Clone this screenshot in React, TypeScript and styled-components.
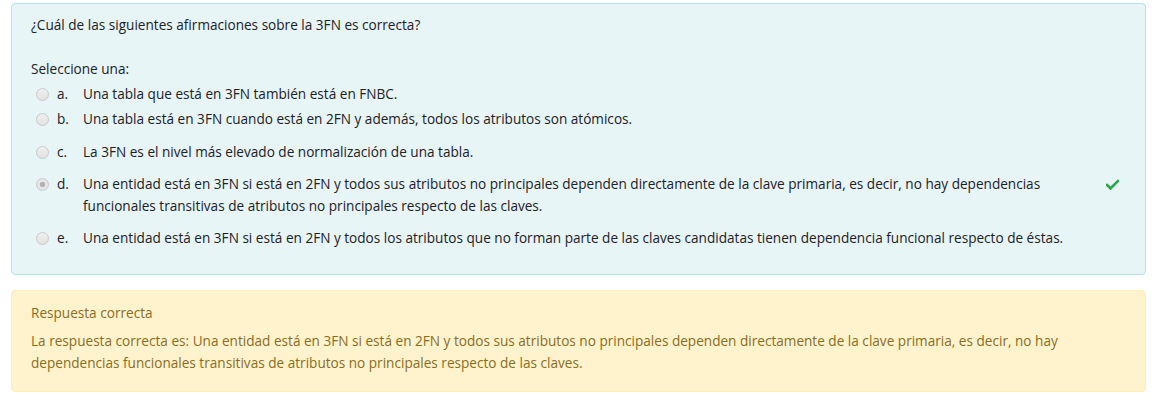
import React from "react";
import styled, { createGlobalStyle } from "styled-components";

const Global = createGlobalStyle`
  html, body { margin: 0; padding: 0; background: #fff; }
  body { font-family: "Open Sans", "Noto Sans", sans-serif; font-size: 13.6px; }
`;

const Page = styled.div`
  padding: 3px 10px 0 11px;
  display: flex;
  flex-direction: column;
  gap: 15px;
`;

const Formulation = styled.div`
  background: #e7f5f7;
  border: 1px solid #b8e1e8;
  border-radius: 4px;
  padding: 10px 19px 25px 19px;
  color: #1d2125;
`;

const QText = styled.p`
  margin: 0 0 22px 0;
  line-height: 22px;
`;

const Prompt = styled.div`
  line-height: 22px;
  margin-bottom: 3px;
`;

const Answers = styled.div`
  display: flex;
  flex-direction: column;
  padding-left: 5px;
`;

const Option = styled.div<{ $mt: number }>`
  display: flex;
  align-items: flex-start;
  margin-top: ${(p) => p.$mt}px;
  line-height: 22px;
`;

const Radio = styled.span<{ $checked?: boolean }>`
  flex: none;
  width: 11px;
  height: 11px;
  margin-top: 5px;
  margin-right: 8px;
  border-radius: 50%;
  border: 1px solid #c9c9c9;
  background: ${(p) =>
    p.$checked
      ? "radial-gradient(circle, #b3b3b3 0 2.5px, #e6e6e6 3px)"
      : "linear-gradient(#f0f0f0, #e2e2e2)"};
  box-sizing: content-box;
`;

const Letter = styled.span`
  flex: none;
  width: 26px;
`;

const AnswerText = styled.span`
  flex: 1;
  max-width: 990px;
`;

const Check = styled.svg`
  flex: none;
  margin-left: auto;
  margin-right: 7px;
  margin-top: 6px;
`;

const Outcome = styled.div`
  background: #fff3cd;
  border: 1px solid #ffeeba;
  border-radius: 4px;
  padding: 11px 19px 17px 19px;
  color: #8a6d1e;
  line-height: 22px;
`;

const OutcomeTitle = styled.div`
  margin-bottom: 6px;
`;

const answers = [
  { l: "a.", t: "Una tabla que está en 3FN también está en FNBC.", mt: 0 },
  { l: "b.", t: "Una tabla está en 3FN cuando está en 2FN y además, todos los atributos son atómicos.", mt: 3 },
  { l: "c.", t: "La 3FN es el nivel más elevado de normalización de una tabla.", mt: 11 },
  {
    l: "d.",
    t: "Una entidad está en 3FN si está en 2FN y todos sus atributos no principales dependen directamente de la clave primaria, es decir, no hay dependencias funcionales transitivas de atributos no principales respecto de las claves.",
    mt: 10,
    checked: true,
  },
  {
    l: "e.",
    t: "Una entidad está en 3FN si está en 2FN y todos los atributos que no forman parte de las claves candidatas tienen dependencia funcional respecto de éstas.",
    mt: 10,
  },
];

export default function App() {
  return (
    <>
      <Global />
      <Page>
        <Formulation>
          <QText>¿Cuál de las siguientes afirmaciones sobre la 3FN es correcta?</QText>
          <Prompt>Seleccione una:</Prompt>
          <Answers>
            {answers.map((a) => (
              <Option key={a.l} $mt={a.mt}>
                <Radio $checked={a.checked} />
                <Letter>{a.l}</Letter>
                <AnswerText>{a.t}</AnswerText>
                {a.checked && (
                  <Check width="13" height="11" viewBox="0 0 13 11">
                    <path d="M1 6 L4.5 9.5 L12 2" fill="none" stroke="#28a745" strokeWidth="2.6" strokeLinecap="square" />
                  </Check>
                )}
              </Option>
            ))}
          </Answers>
        </Formulation>
        <Outcome>
          <OutcomeTitle>Respuesta correcta</OutcomeTitle>
          La respuesta correcta es: Una entidad está en 3FN si está en 2FN y todos sus atributos no principales dependen directamente de la clave primaria, es decir, no hay dependencias funcionales transitivas de atributos no principales respecto de las claves.
        </Outcome>
      </Page>
    </>
  );
}
